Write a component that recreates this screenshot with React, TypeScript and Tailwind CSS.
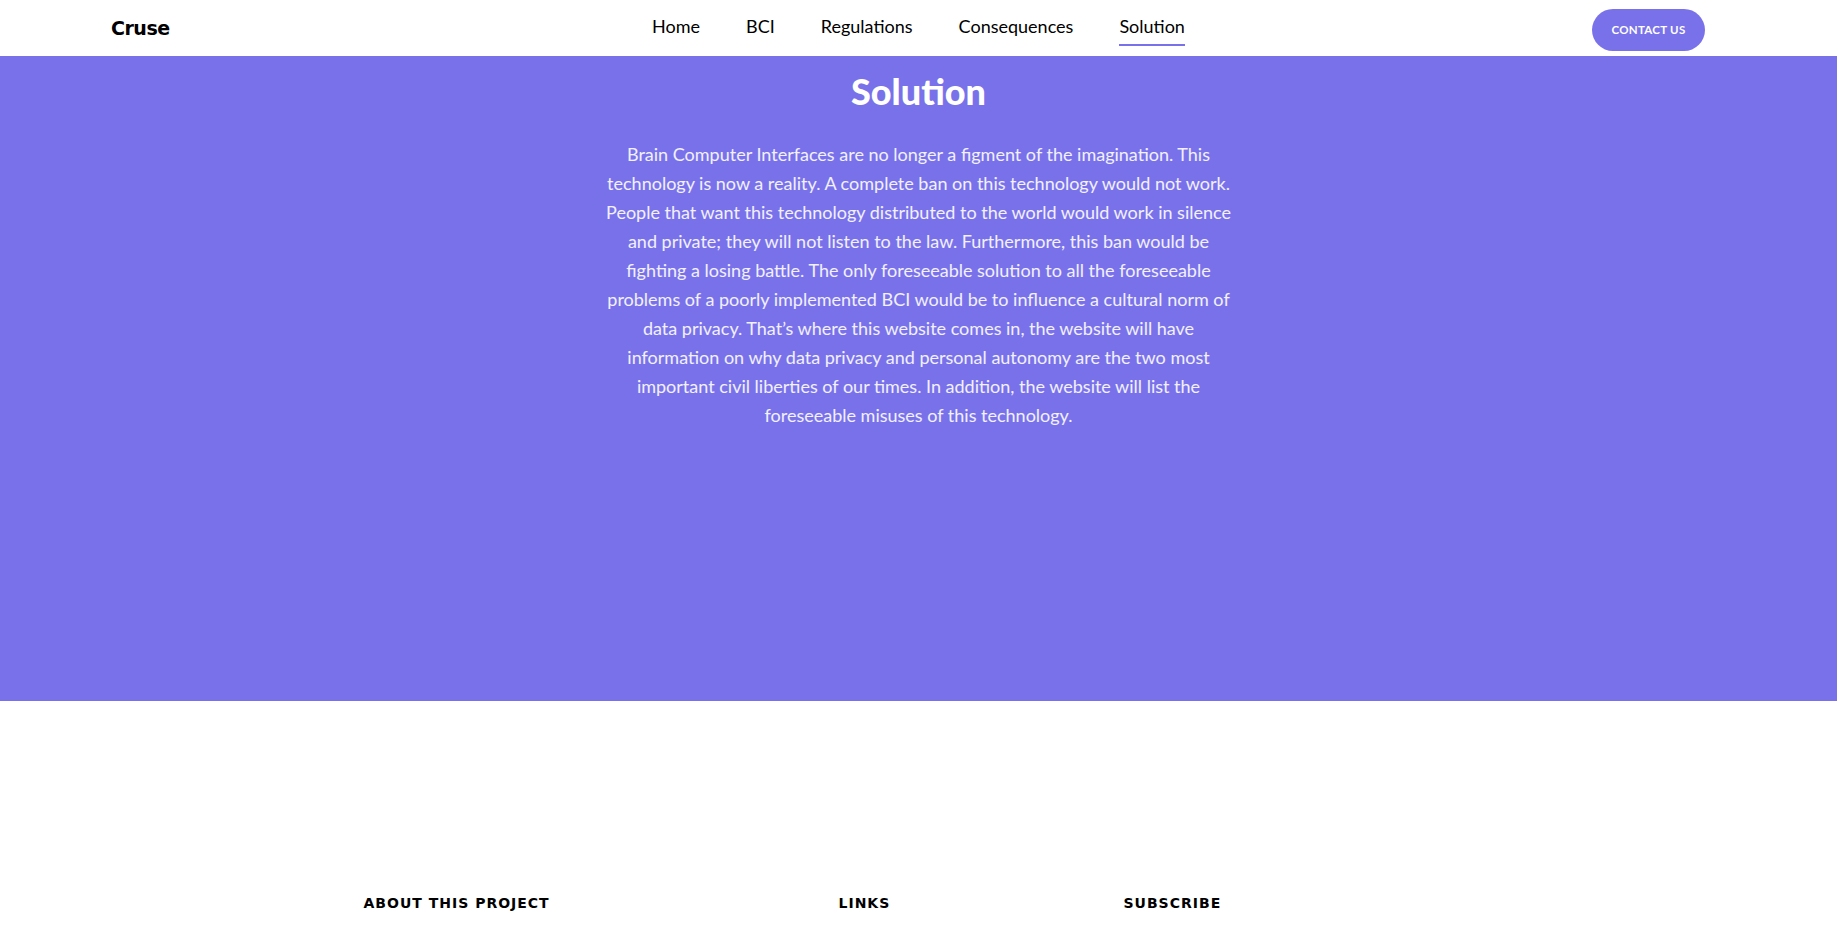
import { useState } from 'react';

const navItems = ['Home', 'BCI', 'Regulations', 'Consequences', 'Solution'];

export default function App() {
  const [active] = useState('Solution');
  return (
    <div className="min-h-screen bg-white text-black" style={{ fontFamily: 'Lato, "Noto Sans", sans-serif' }}>
      {/* header */}
      <header className="grid h-[56px] grid-cols-[1fr_auto_1fr] items-center bg-white px-[111px]">
        <div className="text-[19px] font-bold tracking-tight" style={{ fontFamily: '"DejaVu Sans", sans-serif' }}>
          Cruse
        </div>
        <nav className="flex gap-[46px]">
          {navItems.map((item) => (
            <a
              key={item}
              href="#"
              className={
                item == active
                  ? 'relative pt-[2px] pb-[4px] text-[18px] text-black border-b-2 border-[#7971ea]'
                  : 'relative pt-[2px] pb-[4px] text-[18px] text-black border-b-2 border-transparent'
              }
            >
              {item}
            </a>
          ))}
        </nav>
        <div className="flex justify-end pr-[21px] pt-[3px]">
          <button className="h-[42px] w-[113px] rounded-full bg-[#7971ea] text-[11.5px] font-bold tracking-wide text-white">
            CONTACT US
          </button>
        </div>
      </header>

      {/* solution */}
      <section className="flex h-[645px] flex-col items-center bg-[#7971ea] pt-[8px]">
        <h1 className="text-[36px] font-black text-white">Solution</h1>
        <p className="mt-[22px] w-[636px] text-center text-[18px] leading-[29px] text-white/90">
          Brain Computer Interfaces are no longer a figment of the imagination. This technology is now a reality. A
          complete ban on this technology would not work. People that want this technology distributed to the world
          would work in silence and private; they will not listen to the law. Furthermore, this ban would be fighting
          a losing battle. The only foreseeable solution to all the foreseeable problems of a poorly implemented BCI
          would be to influence a cultural norm of data privacy. That’s where this website comes in, the website will
          have information on why data privacy and personal autonomy are the two most important civil liberties of
          our times. In addition, the website will list the foreseeable misuses of this technology.
        </p>
      </section>

      {/* footer */}
      <footer className="pt-[192px] pb-[40px]">
        <div className="mx-auto grid w-[1110px] grid-cols-[475px_285px_1fr]">
          <h3 className="text-[14px] font-bold tracking-[1px]" style={{ fontFamily: '"DejaVu Sans", sans-serif' }}>
            ABOUT THIS PROJECT
          </h3>
          <h3 className="text-[14px] font-bold tracking-[1px]" style={{ fontFamily: '"DejaVu Sans", sans-serif' }}>
            LINKS
          </h3>
          <h3 className="text-[14px] font-bold tracking-[1px]" style={{ fontFamily: '"DejaVu Sans", sans-serif' }}>
            SUBSCRIBE
          </h3>
        </div>
      </footer>
    </div>
  );
}
